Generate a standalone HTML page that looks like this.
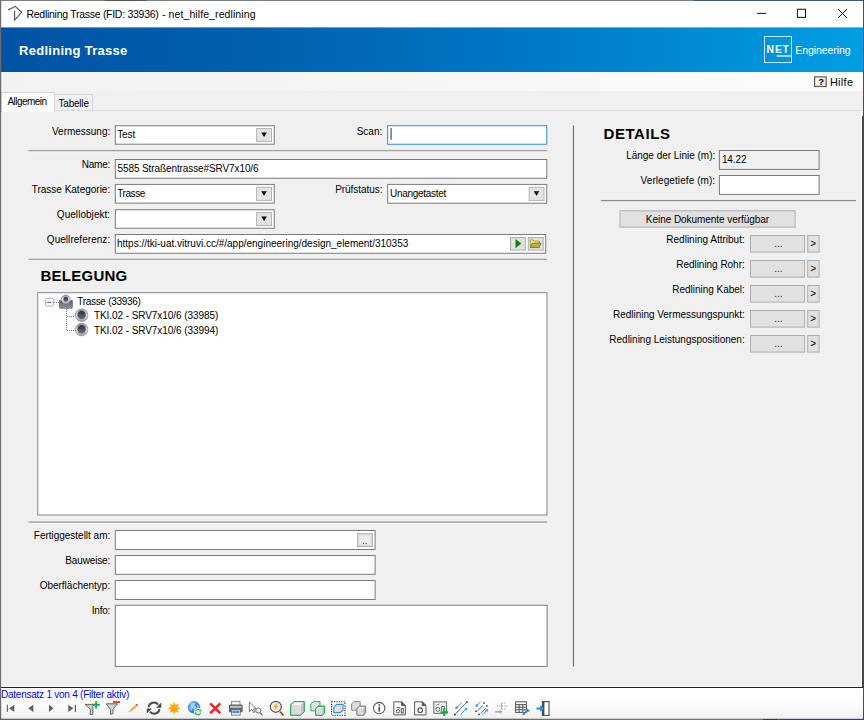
<!DOCTYPE html>
<html lang="de">
<head>
<meta charset="utf-8">
<title>Redlining Trasse</title>
<style>
html,body{margin:0;padding:0;}
body{width:864px;height:720px;overflow:hidden;background:#f0f0f0;position:relative;font-family:"Liberation Sans",sans-serif;font-size:10px;line-height:12px;color:#000;}
.a{position:absolute;}
.t{position:absolute;white-space:nowrap;line-height:12px;height:12px;}
.r{text-align:right;}
.box{position:absolute;box-sizing:border-box;background:#fff;border:1px solid #7a7a7a;}
.btn{position:absolute;box-sizing:border-box;background:#e1e1e1;border:1px solid #adadad;}
.sep{position:absolute;height:1px;background:#a0a0a0;border-bottom:1px solid #fff;}
.h{position:absolute;font-weight:bold;font-size:15px;line-height:18px;white-space:nowrap;}
.dd{position:absolute;box-sizing:border-box;background:#e1e1e1;border:1px solid #adadad;width:15px;height:14px;}
.dd:after{content:"";position:absolute;left:3px;top:4px;border-left:3.5px solid transparent;border-right:3.5px solid transparent;border-top:5px solid #000;}
</style>
</head>
<body>
<!-- window chrome -->
<div class="a" style="left:0;top:0;width:864px;height:28px;background:#fff;"></div>
<div class="a" style="left:0;top:27px;width:864px;height:1px;opacity:0.6;background:linear-gradient(90deg,#0053a5 0%,#0060b0 30%,#0078c4 60%,#009ee3 100%);"></div>
<div class="a" style="left:0;top:28px;width:864px;height:44px;background:linear-gradient(90deg,#0053a5 0%,#0060b0 30%,#0078c4 60%,#009ee3 100%);"></div>
<div class="a" style="left:0;top:72px;width:864px;height:19px;background:linear-gradient(90deg,#f2f2f2 0%,#f4f4f4 30%,#f9f9f9 70%,#fbfbfb 100%);"></div>

<svg class="a" style="left:4px;top:2px" width="22" height="22" viewBox="4 2 22 22"><path d="M8.1 10L15.2 6.3L21.7 12.3L14.6 20V11" fill="none" stroke="#4c5157" stroke-width="1.1" stroke-linejoin="miter"/></svg>
<div class="t" style="left:26.5px;top:8.2px;font-size:10.5px;line-height:13px;height:13px;letter-spacing:-0.279px;" id="wtitle">Redlining Trasse (FID: 33936)</div><div class="t" style="left:162px;top:8.2px;font-size:10.5px;line-height:13px;height:13px;letter-spacing:0.092px;" id="wtitle2">- net_hilfe_redlining</div>
<svg class="a" style="left:750px;top:4px" width="104" height="20" viewBox="0 0 104 20"><g stroke="#111" stroke-width="1" fill="none"><path d="M7.1 9.4H16"/><rect x="47.4" y="5.25" width="8.1" height="8.1"/><path d="M88 5L97 14M97 5L88 14"/></g></svg>

<div class="t" style="left:19px;top:43px;font-size:13px;line-height:16px;height:16px;font-weight:bold;color:#fff;letter-spacing:0.284px;" id="btitle">Redlining Trasse</div>

<!-- logo -->
<svg class="a" style="left:760px;top:32px" width="36" height="36" viewBox="760 32 36 36"><rect x="764.6" y="36.5" width="26.9" height="26.1" fill="none" stroke="#e4f3fc" stroke-width="0.9"/><rect x="776.6" y="55.4" width="14.6" height="1.2" fill="#fff"/></svg>
<div class="t" style="left:766.6px;top:44.3px;font-size:10.3px;font-weight:bold;color:#fff;letter-spacing:0.85px;" id="net">NET</div>
<div class="t" style="left:795.2px;top:44px;font-size:10.5px;color:#fff;letter-spacing:-0.060px;" id="eng">Engineering</div>

<!-- help -->
<svg class="a" style="left:812px;top:74px" width="18" height="16" viewBox="812 74 18 16"><defs><linearGradient id="gh" x1="0" y1="0" x2="1" y2="1"><stop offset="0" stop-color="#ffffff"/><stop offset="1" stop-color="#dedede"/></linearGradient></defs><rect x="814.6" y="76.9" width="11.6" height="9.6" fill="url(#gh)" stroke="#5a5a5a" stroke-width="1.2"/></svg>
<div class="t" style="left:814.6px;width:13px;text-align:center;top:76.2px;font-size:9.5px;font-weight:bold;color:#000;">?</div>
<div class="t" style="left:829.9px;top:76.2px;font-size:10.8px;letter-spacing:0.351px;" id="hilfe">Hilfe</div>

<!-- tabs -->
<div class="a" style="left:54px;top:94px;width:39px;height:17px;box-sizing:border-box;border:1px solid #d9d9d9;border-bottom:none;background:#f0f0f0;"></div>
<div class="a" style="left:1px;top:110px;width:861px;height:578px;box-sizing:border-box;border:1px solid #dcdcdc;border-left-color:#fff;border-right:none;border-bottom:none;"></div>
<div class="a" style="left:1px;top:92px;width:54px;height:20px;box-sizing:border-box;border:1px solid #d9d9d9;border-bottom:none;background:#fff;"></div>
<div class="t" style="left:7.5px;top:96px;letter-spacing:-0.559px;" id="tab1">Allgemein</div>
<div class="t" style="left:58.5px;top:98.1px;letter-spacing:-0.207px;" id="tab2">Tabelle</div>

<!-- boxes -->
<svg class="a" style="left:0;top:0" width="864" height="720" viewBox="0 0 864 720" id="boxes">
<rect x="115.30" y="125.75" width="158.95" height="18.45" fill="#fff" stroke="#7a7a7a" stroke-width="1"/>
<rect x="256.60" y="128.60" width="14.90" height="12.90" fill="#e4e4e4" stroke="#b4b4b4" stroke-width="1"/><path d="M261.25 132.55H266.85L264.05 136.95Z" fill="#000"/>
<rect x="387.70" y="125.75" width="159.05" height="18.50" fill="#fff" stroke="#2f8be6" stroke-width="1"/>
<rect x="390.6" y="128.1" width="0.9" height="11.7" fill="#111"/>
<rect x="28.5" y="149.95" width="518.75" height="1.6" fill="#a4a4a4"/><rect x="28.5" y="151.55" width="518.75" height="0.7" fill="#fafafa"/>
<rect x="115.30" y="159.50" width="431.45" height="18.75" fill="#fff" stroke="#7a7a7a" stroke-width="1"/>
<rect x="115.30" y="184.40" width="158.95" height="18.70" fill="#fff" stroke="#7a7a7a" stroke-width="1"/>
<rect x="256.60" y="187.30" width="14.90" height="13.10" fill="#e4e4e4" stroke="#b4b4b4" stroke-width="1"/><path d="M261.25 191.35H266.85L264.05 195.75Z" fill="#000"/>
<rect x="387.70" y="184.40" width="159.05" height="18.80" fill="#fff" stroke="#7a7a7a" stroke-width="1"/>
<rect x="529.10" y="187.30" width="14.90" height="13.10" fill="#e4e4e4" stroke="#b4b4b4" stroke-width="1"/><path d="M533.75 191.35H539.35L536.55 195.75Z" fill="#000"/>
<rect x="115.30" y="209.75" width="158.95" height="18.50" fill="#fff" stroke="#7a7a7a" stroke-width="1"/>
<rect x="256.60" y="212.60" width="14.90" height="12.90" fill="#e4e4e4" stroke="#b4b4b4" stroke-width="1"/><path d="M261.25 216.55H266.85L264.05 220.95Z" fill="#000"/>
<rect x="115.30" y="234.50" width="430.40" height="18.75" fill="#fff" stroke="#7a7a7a" stroke-width="1"/>
<rect x="510.50" y="237.50" width="14.80" height="12.60" fill="#e1e1e1" stroke="#adadad" stroke-width="1"/>
<path d="M515.5 239L521.3 243.6L515.5 248.3Z" fill="#0a820f"/>
<rect x="528.30" y="237.50" width="14.90" height="12.60" fill="#e1e1e1" stroke="#adadad" stroke-width="1"/>
<path d="M530.4 239.8h2.6l0.9 1.2h5.4v6.4h-8.9z" fill="#f4f060" stroke="#77742a" stroke-width="0.6"/><path d="M530.3 247.6l2.1-4.5h8.8l-2 4.5z" fill="#b4b248" stroke="#6b6420" stroke-width="0.7"/>
<rect x="28.5" y="258.70" width="518.50" height="1.6" fill="#a4a4a4"/><rect x="28.5" y="260.30" width="518.50" height="0.7" fill="#fafafa"/>
<rect x="37.80" y="292.70" width="509.20" height="222.30" fill="#fff" stroke="#828790" stroke-width="1"/>
<rect x="28.5" y="521.30" width="518.75" height="1.6" fill="#a4a4a4"/><rect x="28.5" y="522.90" width="518.75" height="0.7" fill="#fafafa"/>
<rect x="115.30" y="530.50" width="259.80" height="19.00" fill="#fff" stroke="#7a7a7a" stroke-width="1"/>
<rect x="357.60" y="533.70" width="14.80" height="12.80" fill="#e1e1e1" stroke="#adadad" stroke-width="1"/>
<rect x="359.6" y="535.6" width="10.6" height="8.8" fill="#ececec"/>
<rect x="115.30" y="555.50" width="259.80" height="18.80" fill="#fff" stroke="#7a7a7a" stroke-width="1"/>
<rect x="115.30" y="580.50" width="259.80" height="19.00" fill="#fff" stroke="#7a7a7a" stroke-width="1"/>
<rect x="115.30" y="605.25" width="431.80" height="61.15" fill="#fff" stroke="#7a7a7a" stroke-width="1"/>
<rect x="572.9" y="125.3" width="1.1" height="541.4" fill="#6e6e6e"/>
<rect x="719.40" y="150.50" width="99.70" height="18.90" fill="#f0f0f0" stroke="#7a7a7a" stroke-width="1"/>
<rect x="719.40" y="175.50" width="99.70" height="18.90" fill="#fff" stroke="#7a7a7a" stroke-width="1"/>
<rect x="600.8" y="199.95" width="255.2" height="1.2" fill="#8c8c8c"/>
<rect x="620.00" y="210.80" width="175.10" height="16.30" fill="#e1e1e1" stroke="#adadad" stroke-width="1"/>
<rect x="750.50" y="235.50" width="54.10" height="16.60" fill="#e1e1e1" stroke="#adadad" stroke-width="1"/>
<rect x="807.70" y="235.50" width="11.40" height="16.60" fill="#e1e1e1" stroke="#adadad" stroke-width="1"/>
<rect x="750.50" y="260.50" width="54.10" height="16.60" fill="#e1e1e1" stroke="#adadad" stroke-width="1"/>
<rect x="807.70" y="260.50" width="11.40" height="16.60" fill="#e1e1e1" stroke="#adadad" stroke-width="1"/>
<rect x="750.50" y="285.50" width="54.10" height="16.60" fill="#e1e1e1" stroke="#adadad" stroke-width="1"/>
<rect x="807.70" y="285.50" width="11.40" height="16.60" fill="#e1e1e1" stroke="#adadad" stroke-width="1"/>
<rect x="750.50" y="310.50" width="54.10" height="16.60" fill="#e1e1e1" stroke="#adadad" stroke-width="1"/>
<rect x="807.70" y="310.50" width="11.40" height="16.60" fill="#e1e1e1" stroke="#adadad" stroke-width="1"/>
<rect x="750.50" y="335.50" width="54.10" height="16.60" fill="#e1e1e1" stroke="#adadad" stroke-width="1"/>
<rect x="807.70" y="335.50" width="11.40" height="16.60" fill="#e1e1e1" stroke="#adadad" stroke-width="1"/>
</svg>
<!-- left form -->
<div class="t r" style="right:753.8px;top:125.7px;letter-spacing:-0.014px;">Vermessung:</div>
<div class="t" style="left:117.2px;top:128.5px;letter-spacing:-0.120px;">Test</div>

<div class="t r" style="right:481.6px;top:126px;letter-spacing:0.039px;">Scan:</div>


<div class="t r" style="right:753.8px;top:159px;letter-spacing:-0.186px;">Name:</div>
<div class="t" style="left:117.5px;top:162.5px;letter-spacing:-0.100px;">5585 Straßentrasse#SRV7x10/6</div>

<div class="t r" style="right:753.8px;top:183.5px;letter-spacing:-0.002px;">Trasse Kategorie:</div>
<div class="t" style="left:117.2px;top:187.7px;letter-spacing:-0.398px;">Trasse</div>

<div class="t r" style="right:481.6px;top:183.7px;letter-spacing:-0.053px;">Prüfstatus:</div>
<div class="t" style="left:390px;top:187.7px;letter-spacing:-0.298px;">Unangetastet</div>

<div class="t r" style="right:753.8px;top:208.5px;letter-spacing:0.046px;">Quellobjekt:</div>

<div class="t r" style="right:753.8px;top:233.5px;letter-spacing:0.039px;">Quellreferenz:</div>
<div class="t" style="left:117px;top:237.5px;">https://tki-uat.vitruvi.cc/#/app/engineering/design_element/310353</div>



<div class="h" style="left:40.5px;top:267.4px;letter-spacing:0.252px;" id="h1">BELEGUNG</div>

<!-- tree -->
<div id="tree">
<svg class="a" style="left:38px;top:294px" width="60" height="44" viewBox="38 294 60 44">
<defs>
<linearGradient id="gb" x1="0" y1="0" x2="0" y2="1"><stop offset="0" stop-color="#596170"/><stop offset="1" stop-color="#8d96a3"/></linearGradient>
<linearGradient id="gr" x1="0" y1="0" x2="0" y2="1"><stop offset="0" stop-color="#8a8f98"/><stop offset="0.5" stop-color="#e4e6ea"/><stop offset="1" stop-color="#9a9fa8"/></linearGradient>
<linearGradient id="gi" x1="0" y1="0" x2="0" y2="1"><stop offset="0" stop-color="#2e3036"/><stop offset="1" stop-color="#6d7078"/></linearGradient>
</defs>
<g stroke="#808080" stroke-width="1" stroke-dasharray="1 1" fill="none">
<path d="M54 302.5H59"/><path d="M66.5 309V331"/><path d="M67 316.5H76"/><path d="M67 330.5H76"/>
</g>
<rect x="45.5" y="298.5" width="8" height="7.5" rx="1.2" fill="#fff" stroke="#a9a9a9" stroke-width="0.9"/>
<path d="M47 302.3H51.5" stroke="#3f5fbf" stroke-width="1"/>
<path d="M59.4 300.5H72.4V307.2Q72.4 308.3 71.3 308.3H60.5Q59.4 308.3 59.4 307.2Z" fill="url(#gb)" stroke="#4a5160" stroke-width="0.6"/>
<circle cx="65.8" cy="299.6" r="4.5" fill="url(#gr)" stroke="#70757f" stroke-width="0.5"/>
<circle cx="65.8" cy="299.4" r="2.4" fill="url(#gi)"/>
<circle cx="81.6" cy="315.2" r="6.3" fill="url(#gr)" stroke="#7a7f88" stroke-width="0.6"/>
<circle cx="81.6" cy="315" r="4.2" fill="url(#gi)"/>
<circle cx="81.6" cy="329.5" r="6.3" fill="url(#gr)" stroke="#7a7f88" stroke-width="0.6"/>
<circle cx="81.6" cy="329.3" r="4.2" fill="url(#gi)"/>
</svg>
<div class="t" style="left:77.2px;top:296.1px;letter-spacing:-0.290px;" id="tr0">Trasse (33936)</div>
<div class="t" style="left:93.9px;top:310.3px;letter-spacing:-0.062px;" id="tr1">TKI.02 - SRV7x10/6 (33985)</div>
<div class="t" style="left:93.9px;top:324.5px;letter-spacing:-0.062px;" id="tr2">TKI.02 - SRV7x10/6 (33994)</div>
</div>


<div class="t r" style="right:753.8px;top:529.9px;letter-spacing:-0.017px;">Fertiggestellt am:</div>

<div class="t" style="left:362.1px;top:535px;color:#513;">..</div>

<div class="t r" style="right:753.8px;top:554.8px;letter-spacing:-0.133px;">Bauweise:</div>

<div class="t r" style="right:753.8px;top:579.8px;letter-spacing:-0.002px;">Oberflächentyp:</div>

<div class="t r" style="right:753.8px;top:604.8px;letter-spacing:-0.192px;">Info:</div>


<!-- right panel -->
<div class="h" style="left:603.5px;top:125.4px;letter-spacing:0.567px;" id="h2">DETAILS</div>
<div class="t r" style="right:148.8px;top:149.8px;letter-spacing:-0.024px;">Länge der Linie (m):</div>
<div class="t" style="left:721.9px;top:154px;letter-spacing:-0.082px;">14.22</div>
<div class="t r" style="right:148.8px;top:175px;letter-spacing:0.075px;">Verlegetiefe (m):</div>


<div class="t" style="left:619.5px;width:176px;text-align:center;top:213.5px;letter-spacing:-0.050px;">Keine Dokumente verfügbar</div>
<div id="rl">
<div class="t r" style="right:119.3px;top:233.5px;letter-spacing:-0.001px;" id="rl0">Redlining Attribut:</div>
<div class="t" style="left:750.8px;width:55px;text-align:center;top:238.3px;color:#513;">...</div>
<div class="t" style="left:807px;width:12.5px;text-align:center;top:237.5px;">&gt;</div>
<div class="t r" style="right:119.3px;top:258.5px;letter-spacing:-0.031px;" id="rl1">Redlining Rohr:</div>
<div class="t" style="left:750.8px;width:55px;text-align:center;top:263.3px;color:#513;">...</div>
<div class="t" style="left:807px;width:12.5px;text-align:center;top:262.5px;">&gt;</div>
<div class="t r" style="right:119.3px;top:283.5px;letter-spacing:-0.024px;" id="rl2">Redlining Kabel:</div>
<div class="t" style="left:750.8px;width:55px;text-align:center;top:288.3px;color:#513;">...</div>
<div class="t" style="left:807px;width:12.5px;text-align:center;top:287.5px;">&gt;</div>
<div class="t r" style="right:119.3px;top:308.5px;letter-spacing:-0.021px;" id="rl3">Redlining Vermessungspunkt:</div>
<div class="t" style="left:750.8px;width:55px;text-align:center;top:313.3px;color:#513;">...</div>
<div class="t" style="left:807px;width:12.5px;text-align:center;top:312.5px;">&gt;</div>
<div class="t r" style="right:119.3px;top:333.5px;letter-spacing:-0.010px;" id="rl4">Redlining Leistungspositionen:</div>
<div class="t" style="left:750.8px;width:55px;text-align:center;top:338.3px;color:#513;">...</div>
<div class="t" style="left:807px;width:12.5px;text-align:center;top:337.5px;">&gt;</div>
</div>

<!-- status bar -->
<div class="a" style="left:0;top:687px;width:864px;height:33px;background:#fff;border-top:1px solid #222;box-sizing:border-box;"></div>
<div class="a" style="left:0;top:699px;width:864px;height:20px;background:linear-gradient(180deg,#fff 0%,#f9f9f9 50%,#f0f0f0 100%);"></div>
<div class="t" style="left:1px;top:688.5px;color:#0000ff;letter-spacing:-0.238px;" id="status">Datensatz 1 von 4 (Filter aktiv)</div>

<!-- ICONS -->
<svg class="a" style="left:0;top:696px" width="560" height="24" viewBox="0 696 560 24">
<defs>
<linearGradient id="gl" x1="0" y1="0" x2="1" y2="1"><stop offset="0" stop-color="#6ab8f0"/><stop offset="1" stop-color="#1565b8"/></linearGradient>
</defs>
<!-- nav -->
<g fill="#5f5f5f">
<rect x="6.8" y="704.7" width="1.1" height="7.2"/><path d="M9.2 708.3L14.3 704.7V711.9Z"/>
<path d="M28.2 708.3L33.3 704.7V711.9Z"/>
<path d="M53.4 708.3L49 704.7V711.9Z"/>
<path d="M73.4 708.3L68.3 704.7V711.9Z"/><rect x="74.8" y="704.7" width="1.2" height="7.2"/>
</g>
<!-- filter + -->
<path d="M85 704.4H94.5L92.8 706.4L92.8 714.2L90.3 714.8V709.3Z" fill="#cfcfcf" stroke="#555" stroke-width="0.9" stroke-linejoin="round"/>
<path d="M96.1 701.2V708.5M92.5 704.8H99.8" stroke="#0bb04a" stroke-width="1.9" fill="none"/>
<!-- filter - -->
<path d="M106.3 703.8H117.5L113 709.3V713.6L110.4 714.3V709.3Z" fill="#d4d4d4" stroke="#555" stroke-width="0.9" stroke-linejoin="round"/>
<rect x="113" y="701.2" width="7" height="1.7" fill="#ff1c1c"/>
<!-- pencil -->
<g transform="translate(133.3 708.3) rotate(-43) scale(0.86)">
<rect x="-3.6" y="-1.5" width="7.4" height="3" fill="#f2b43a"/>
<rect x="3.8" y="-1.5" width="1.1" height="3" fill="#c9c9c9"/>
<path d="M4.9 -1.5H5.8Q6.6 -1.5 6.6 0Q6.6 1.5 5.8 1.5H4.9Z" fill="#ee2c3c"/>
<path d="M-3.6 -1.5L-6.3 0L-3.6 1.5Z" fill="#d9c7a5"/>
<path d="M-5.2 -0.6L-6.5 0L-5.2 0.6Z" fill="#555"/>
</g>
<!-- refresh -->
<g fill="none" stroke="#4a4a4a" stroke-width="1.9">
<path d="M148.6 707.2A5.4 5.4 0 0 1 158.2 704.6"/>
<path d="M159.5 709A5.4 5.4 0 0 1 149.9 711.6"/>
</g>
<path d="M161.3 702.6V707.8H156.1Z" fill="#4a4a4a"/>
<path d="M146.8 713.6V708.4H152Z" fill="#4a4a4a"/>
<!-- sun -->
<path id="sun" fill="#ffa60a" d="M174.2 701.7L175.5 705.3L178.9 703.6L177.2 707.0L180.8 708.3L177.2 709.6L178.9 713.0L175.5 711.3L174.2 714.9L172.9 711.3L169.5 713.0L171.2 709.6L167.6 708.3L171.2 707.0L169.5 703.6L172.9 705.3Z"/><circle cx="174.2" cy="708.3" r="3.6" fill="#ffa60a"/>
<!-- globe -->
<circle cx="194" cy="707.3" r="6.2" fill="url(#gl)"/>
<path d="M190.5 703.3Q193 702 195.5 703.2L194.3 705.3L196.2 706.7L194.6 709.4L192.3 708.2L191.6 710.8L189.4 708.4L190.8 706.2Z" fill="#a8d8f8" opacity="0.85"/>
<path d="M197.3 704.4L199.4 706.2L198.6 708.6L197 707.2Z" fill="#a8d8f8" opacity="0.8"/>
<circle cx="198" cy="712" r="4" fill="#fff"/>
<g fill="none" stroke="#22b14c" stroke-width="1.3">
<path d="M195.4 711.4A2.7 2.7 0 0 1 199.6 709.9"/>
<path d="M200.6 712.6A2.7 2.7 0 0 1 196.4 714.1"/>
</g>
<path d="M201.4 708.8V711.6H198.6Z" fill="#22b14c"/>
<path d="M194.6 715.2V712.4H197.4Z" fill="#22b14c"/>
<!-- red X -->
<path d="M210.2 703.4L220.3 713.2M220.3 703.4L210.2 713.2" stroke="#ee2727" stroke-width="2.6" fill="none"/>
<!-- printer -->
<rect x="231.6" y="701.3" width="8.4" height="4.2" fill="#f4f4f4" stroke="#777" stroke-width="0.8"/>
<rect x="228.9" y="704.6" width="13.8" height="7.6" rx="1.2" fill="#626262"/>
<rect x="230" y="705.8" width="11.6" height="2.2" fill="#b9b9b9"/>
<rect x="231.4" y="709.8" width="8.8" height="5.3" fill="#fff" stroke="#666" stroke-width="0.8"/>
<rect x="232.3" y="710.6" width="7" height="2.6" fill="#3d95e6"/>
<!-- cursor zoom -->
<path d="M249.4 702V711.6L252 709.4L253.6 712.6L255 711.9L253.5 708.9L256.2 708.7Z" fill="#fff" stroke="#666" stroke-width="0.9" stroke-linejoin="round"/>
<circle cx="258.3" cy="710.5" r="2.6" fill="#eee" stroke="#777" stroke-width="1"/>
<path d="M260.2 712.6L262.5 715.3" stroke="#8a6a4a" stroke-width="1.3"/>
<!-- zoom lightning -->
<path d="M280 711.6L283.6 715.3" stroke="#7a5a3c" stroke-width="1.7"/>
<circle cx="275.8" cy="706.8" r="5.5" fill="#ececf2" stroke="#555" stroke-width="1.2"/>
<path d="M277.8 702.6L272.8 707.2H275.6L273.6 711L279 706.2H276.2Z" fill="#ffa60a"/>
<!-- green cube -->
<g stroke="#22b14c" stroke-width="1" stroke-linejoin="round">
<path d="M290.8 704.8L294 701.6H304.2V711.6L300.6 715.2H290.8Z" fill="#fff"/>
<path d="M300.6 704.8L304.2 701.6V711.6L300.6 715.2Z" fill="#c9c3c3" stroke="none"/>
<rect x="290.8" y="704.8" width="9.8" height="10.4" fill="#dcdcdc" stroke="none"/>
<path d="M290.8 704.8L294 701.6H304.2V711.6L300.6 715.2H290.8Z" fill="none"/>
</g>
<!-- two green cubes -->
<g stroke="#22b14c" stroke-width="1" stroke-linejoin="round">
<path d="M310.8 704L313.4 701.6H320V708.4L317.6 710.8H310.8Z" fill="#e4e4e4"/>
<path d="M315.6 708.6L318.2 706.2H324.6V713L322.2 715.3H315.6Z" fill="#f4f4f4"/>
<rect x="315.6" y="708.6" width="6.6" height="6.7" fill="#dadada" stroke="none"/>
<path d="M322.2 708.6L324.6 706.2V713L322.2 715.3Z" fill="#c4bebe" stroke="none"/>
<path d="M315.6 708.6L318.2 706.2H324.6V713L322.2 715.3H315.6Z" fill="none"/>
</g>
<!-- dashed select -->
<rect x="331.6" y="701.8" width="13.4" height="13.4" fill="#fff" stroke="#222" stroke-width="1.1" stroke-dasharray="1.2 1.2"/>
<path d="M333.8 707.2L336.6 704.4H343V710L340.2 712.6H333.8Z" fill="#e6dcd6" stroke="#1e8ff0" stroke-width="1.1" stroke-linejoin="round"/>
<!-- two gray cubes -->
<g stroke="#8a8a8a" stroke-width="1" stroke-linejoin="round">
<path d="M351.6 703.8L354 701.6H360.2V708L357.8 710.2H351.6Z" fill="#dcdcdc"/>
<path d="M357 708.6L359.4 706.2H365.6V713L363.2 715.3H357Z" fill="#f0f0f0"/>
<rect x="357" y="708.6" width="6.2" height="6.7" fill="#dadada" stroke="none"/>
<path d="M363.2 708.6L365.6 706.2V713L363.2 715.3Z" fill="#b8b8b8" stroke="none"/>
<path d="M357 708.6L359.4 706.2H365.6V713L363.2 715.3H357Z" fill="none"/>
</g>
<!-- info -->
<circle cx="379.2" cy="708.1" r="5.7" fill="#fff" stroke="#5a5a5a" stroke-width="1.1"/>
<rect x="378.5" y="704.2" width="1.5" height="1.5" fill="#444"/><rect x="378.5" y="706.6" width="1.5" height="5" fill="#444"/>
<!-- doc chart -->
<g fill="none" stroke="#5a5a5a" stroke-width="1">
<path d="M393.8 701.8H401.6L405.4 705.6V714.9H393.8Z" fill="#f8f8f8"/>
<path d="M401.6 701.8V705.6H405.4Z" fill="#555"/>
<circle cx="398" cy="711.3" r="1.7"/><path d="M396.6 707.6H400.2"/>
<rect x="401.3" y="708.6" width="2" height="4.4"/>
</g>
<!-- doc circle -->
<g fill="none" stroke="#5a5a5a" stroke-width="1">
<path d="M414.6 701.8H422.2L426 705.6V714.9H414.6Z" fill="#f8f8f8"/>
<path d="M422.2 701.8V705.6H426Z" fill="#555"/>
<circle cx="420.2" cy="710.2" r="2.3" stroke-width="1.2"/>
</g>
<!-- doc plus -->
<g fill="none" stroke="#6a6a6a" stroke-width="1">
<rect x="433.8" y="701.9" width="12.6" height="11.4" fill="#f4f4f4"/>
<circle cx="437.8" cy="709.4" r="2"/><path d="M436.4 705.2L439.4 704"/>
<path d="M441.6 711V706.4H444.4V709"/>
</g>
<path d="M444.2 708.3V716M440.4 712.2H448" stroke="#0bb04a" stroke-width="2" fill="none"/>
<!-- arrows 1 -->
<path d="M454.8 714.6L466.9 702.2" stroke="#4a4a4a" stroke-width="0.85" fill="none"/>
<rect x="454" y="713.9" width="1.6" height="1.6" fill="#333"/><rect x="466.1" y="701.4" width="1.6" height="1.6" fill="#333"/>
<g stroke="#2a92ee" stroke-width="0.95" fill="#2a92ee">
<path d="M461.8 702.6L457 707.3" fill="none"/><path d="M455.5 708.7L456.2 706.4L457.9 708.1Z" stroke-width="0.6"/>
<path d="M460.8 714.2L465.6 709.5" fill="none"/><path d="M467.1 708.1L466.4 710.4L464.7 708.7Z" stroke-width="0.6"/>
</g>
<!-- arrows 2 -->
<g stroke="#4a4a4a" stroke-width="0.85" fill="none"><path d="M477.6 710.8L482.6 705.6"/><path d="M480.8 713.4L485.8 708.2"/></g>
<g fill="#333"><rect x="475.3" y="710.5" width="1.5" height="1.5"/><rect x="483.3" y="702.3" width="1.5" height="1.5"/><rect x="478.3" y="713.7" width="1.5" height="1.5"/><rect x="486.1" y="705.3" width="1.5" height="1.5"/></g>
<g stroke="#2a92ee" stroke-width="0.95" fill="#2a92ee">
<path d="M480.6 701.6L477.2 705" fill="none"/><path d="M475.7 706.5L476.4 704.2L478.1 705.9Z" stroke-width="0.6"/>
<path d="M482.6 714.6L486.4 710.8" fill="none"/><path d="M487.9 709.3L487.2 711.6L485.5 709.9Z" stroke-width="0.6"/>
</g>
<!-- gray tree arrows -->
<g stroke="#aaaaaa" stroke-width="1" fill="none">
<path d="M497 706H507.6" stroke-dasharray="1.4 1"/><path d="M501.6 703H506.6" stroke-dasharray="1.4 1"/><path d="M501.6 709H506.6" stroke-dasharray="1.4 1"/><path d="M501.6 703V709"/>
<path d="M495.2 711.8H500.4" stroke-width="1.6"/>
</g>
<path d="M502.6 711.8L499.6 709.6V714Z" fill="#aaaaaa"/>
<!-- table wrench -->
<g fill="none" stroke="#555" stroke-width="1">
<rect x="515.6" y="701.8" width="10.8" height="10.6" fill="#fafafa"/>
<path d="M515.6 704.6H526.4M515.6 707.2H526.4M515.6 709.8H526.4M519.2 704.6V712.4M522.8 704.6V712.4"/>
</g>
<path d="M522.8 714.9L527.4 710.6" stroke="#1e8ff0" stroke-width="1.7" fill="none"/>
<path d="M526.2 709.6L528 708.4L528.4 710.2L529.8 709.6L529.4 711.4L527.6 712Z" fill="#1e8ff0"/>
<!-- arrow door -->
<rect x="542.4" y="701.6" width="6.6" height="13.8" fill="#fdfdfd" stroke="#4a4a4a" stroke-width="1.1"/>
<rect x="542.4" y="701.6" width="2" height="13.8" fill="#4a4a4a"/>
<path d="M536.4 708.5H541" stroke="#1e8ff0" stroke-width="2" fill="none"/>
<path d="M544.4 708.5L540.2 705.2V711.8Z" fill="#1e8ff0"/>
</svg>
<!-- /ICONS -->
<!-- window borders -->
<svg class="a" style="left:0;top:0" width="864" height="720" viewBox="0 0 864 720">
<rect x="860.6" y="111" width="1.6" height="575.8" fill="#fdfdfd"/>
<rect x="862.2" y="116" width="0.9" height="572" fill="#1a1a1e"/>
<rect x="863.05" y="0" width="1" height="720" fill="#1f4a7a"/>
<rect x="0" y="0" width="1.2" height="720" fill="#6c6c6c"/>
<rect x="0" y="0" width="694" height="0.9" fill="#707070"/>
<rect x="694" y="0" width="170" height="0.9" fill="#24466b"/>
<rect x="105" y="0" width="41" height="0.8" fill="#333" opacity="0.7"/>
<rect x="0" y="718.7" width="529.5" height="1.3" fill="#626262"/>
<rect x="529.5" y="718.7" width="233.5" height="1.3" fill="#72726e"/>
<rect x="763" y="718.8" width="15.5" height="1.2" fill="#3a3a3a"/>
<rect x="778.5" y="718.8" width="85.5" height="1.2" fill="#1f4a7a"/>
<rect x="1.2" y="686" width="859.4" height="0.7" fill="#fafafa"/>
</svg>
</body>
</html>
